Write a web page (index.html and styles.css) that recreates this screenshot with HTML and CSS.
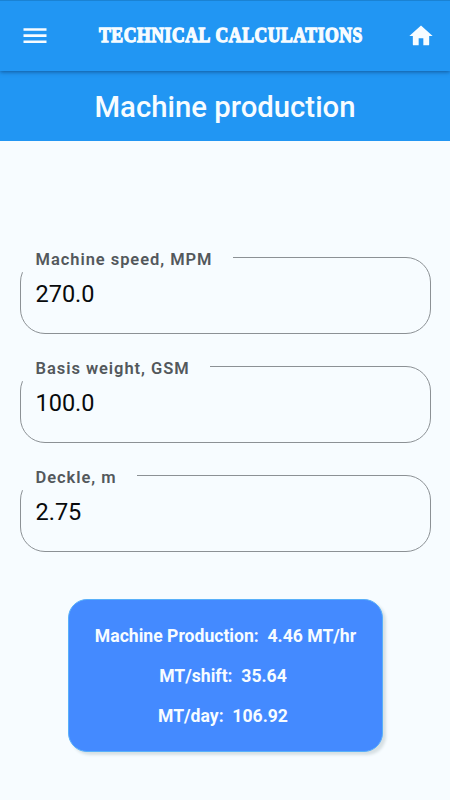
FILE: index.html
```html
<!DOCTYPE html>
<html lang="en">
<head>
<meta charset="utf-8">
<title>Technical Calculations</title>
<link rel="stylesheet" href="styles.css">
</head>
<body>
<header class="appbar">
  <svg class="icon menu" viewBox="0 0 24 18" aria-label="Menu"><path d="M0.5 1.200h23v2.600h-23zM0.500 7.300h23v2.600h-23zM0.500 13.400h23v2.600h-23z"/></svg>
  <div class="brand"><span>TECHNICAL CALCULATIONS</span></div>
  <svg class="icon home" viewBox="0 0 24 24" aria-label="Home"><path d="M10 20v-6h4v6h4.200q.8 0 .8-.8V12h3L12 3 2 12h3v7.200q0 .8.8.8z"/></svg>
</header>
<h1 class="title"><span>Machine production</span></h1>
<main class="content">
  <div class="field">
    <label class="label speed"><span>Machine speed, MPM</span></label>
    <div class="value">270.0</div>
  </div>
  <div class="field">
    <label class="label weight"><span>Basis weight, GSM</span></label>
    <div class="value">100.0</div>
  </div>
  <div class="field">
    <label class="label deckle"><span>Deckle, m</span></label>
    <div class="value">2.75</div>
  </div>
  <section class="results">
    <p>Machine Production:&nbsp; 4.46 MT/hr</p>
    <p class="total">MT/shift:&nbsp; 35.64</p>
    <p class="total">MT/day:&nbsp; 106.92</p>
  </section>
</main>
</body>
</html>
```
FILE: styles.css
```css
* { box-sizing: border-box; }
body {
  margin: 0;
  height: 800px;
  overflow: hidden;
  background: #f7fcff;
  font-family: Roboto, sans-serif;
}
.appbar {
  position: relative;
  display: flex;
  align-items: center;
  height: 71px;
  padding: 0 15.500px 0 23px;
  background: #2196f3;
  border-top: 1px solid #1a82d3;
  box-shadow: 0 1px 4px rgba(0, 30, 70, .5);
}
.icon { fill: #f7fcff; flex: none; }
.menu { width: 24px; height: 18px; }
.home { width: 28px; height: 28px; }
.brand {
  flex: 1;
  min-width: 0;
  margin-top: -2px;
  padding-left: 52px;
  color: #f7fcff;
  font: bold 21px/24px "Liberation Serif", serif;
  letter-spacing: .6px;
  word-spacing: 1px;
  -webkit-text-stroke: 1.300px #f7fcff;
  white-space: nowrap;
}
.brand span {
  display: inline-block;
  transform: scaleX(.843);
  transform-origin: left;
}
.title {
  display: flex;
  align-items: center;
  justify-content: center;
  height: 70px;
  margin: 0;
  padding-top: 1px;
  background: #2196f3;
  color: #f7fcff;
  font-size: 29.300px;
  font-weight: 500;
  line-height: 36px;
}
.content { padding: 116px 19.500px 0 20px; }
.field {
  position: relative;
  height: 77px;
  margin-bottom: 32px;
  padding: 22px 0 0 14.500px;
  border: 1.300px solid #8c9195;
  border-radius: 25px;
}
.label {
  position: absolute;
  left: -2px;
  top: -11px;
  height: 25px;
  padding-left: 16.500px;
  background: #f7fcff;
  color: #53585c;
  font-size: 16.500px;
  font-weight: 600;
  line-height: 26px;
  letter-spacing: .95px;
  white-space: nowrap;
}
.speed { width: 214px; }
.weight { width: 191px; }
.deckle { width: 118px; }
.value {
  color: #080a0c;
  font-size: 23.500px;
  line-height: 29px;
}
.results {
  width: 315px;
  height: 153px;
  margin: 47px 0 0 48px;
  padding: 15.500px 0;
  border: 1px solid #58b0fa;
  border-radius: 19px;
  background: #448aff;
  box-shadow: 3px 3px 3px #d7e0e4;
  color: #f7fcff;
  font-size: 17.600px;
  font-weight: 700;
  line-height: 40px;
  text-align: center;
}
.results p { margin: 0; white-space: nowrap; }
.results .total { padding-right: 5px; }
```
